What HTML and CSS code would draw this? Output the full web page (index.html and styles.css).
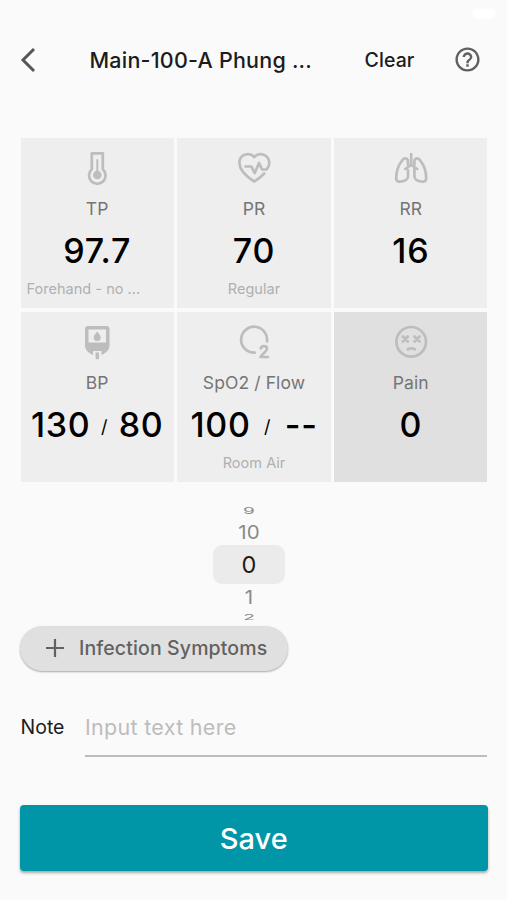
FILE: index.html
```html
<!DOCTYPE html>
<html lang="en">
<head>
<meta charset="utf-8">
<title>Vital signs</title>
<link rel="stylesheet" href="styles.css">
</head>
<body>
<div class="status"><span class="battery"></span></div>
<header class="bar">
  <svg class="back" viewBox="0 0 16 26"><path d="M14 2 3 13l11 11"/></svg>
  <h1 class="title">Main-100-A Phung ...</h1>
  <span class="clear">Clear</span>
  <svg class="help" viewBox="0 0 24 24"><path d="M11 18h2v-2h-2v2zm1-16C6.480 2 2 6.480 2 12s4.480 10 10 10 10-4.480 10-10S17.520 2 12 2zm0 18c-4.410 0-8-3.590-8-8s3.590-8 8-8 8 3.590 8 8-3.590 8-8 8zm0-14c-2.210 0-4 1.790-4 4h2c0-1.100.9-2 2-2s2 .9 2 2c0 2-3 1.750-3 5h2c0-2.250 3-2.500 3-5 0-2.210-1.790-4-4-4z"/></svg>
</header>
<main class="grid">
  <section class="card">
    <svg class="icon" viewBox="0 0 36 36"><path class="s" d="M12.800 3.300h11v16a8.300 8.300 0 1 1-11 0z"/><path class="s thin" d="M18.300 10v13"/><circle class="f" cx="18.300" cy="25" r="4.300"/></svg>
    <div class="label">TP</div><div class="value">97.7</div><div class="sub left">Forehand - no ...</div>
  </section>
  <section class="card">
    <svg class="icon" viewBox="0 0 36 36"><path class="s" d="M9.500 16.500h5.800l3.500 6.500 4.200-10 3 6.500h4.500c2.500-2.500 3.200-5.200 2.600-8.300C31.500 4 23 1.800 18.200 7 13.300 1.800 4.600 4.300 3.500 11c-1.200 8 7 15.500 14.700 20.500 4.200-2.500 7.300-5 10-8"/></svg>
    <div class="label">PR</div><div class="value">70</div><div class="sub">Regular</div>
  </section>
  <section class="card">
    <svg class="icon" viewBox="0 0 36 36"><path class="s" d="M18.200 4v11l-6 4M18.200 15l6 4M15 15v-3.500c0-3.500-3.300-4-5.500-1.500C5.500 15 3.200 21.500 3.200 28c0 3.800 3 4.200 6 3.300 4.500-.8 5.800-2 5.800-5.300v-6M21.400 15v-3.500c0-3.500 3.300-4 5.500-1.500 4 5 6.300 11.500 6.300 18 0 3.800-3 4.200-6 3.300-4.500-.8-5.800-2-5.800-5.300v-8"/></svg>
    <div class="label">RR</div><div class="value">16</div>
  </section>
  <section class="card">
    <svg class="icon" viewBox="0 0 36 36"><path class="f" fill-rule="evenodd" d="M9 2h18.500a3 3 0 0 1 3 3v16.500c0 4.500-3.500 7.500-8 9.500v-4h-8.500v4c-4.500-2-8-5-8-9.500V5a3 3 0 0 1 3-3zm.5 3.500v13h17.500v-13z"/><path class="f" d="M18.200 7.500c2 2.500 3.500 4.200 3.500 6a3.500 3.500 0 0 1-7 0c0-1.800 1.500-3.500 3.500-6zM16.600 28.500h3.400v6l-1.700 1-1.700-1z"/></svg>
    <div class="label">BP</div><div class="value">130<i class="slash">/</i>80</div>
  </section>
  <section class="card">
    <svg class="icon" viewBox="0 0 36 36"><path class="s" d="M18.800 28.700A13 13 0 1 1 31 17.500"/><path class="s" d="M24.800 24.500c.5-3.300 6.200-3.200 6.200.2 0 2.500-4 4.300-6.500 8.300h7.500"/></svg>
    <div class="label">SpO2 / Flow</div><div class="value">100<i class="slash flow">/</i>--</div><div class="sub">Room Air</div>
  </section>
  <section class="card active">
    <svg class="icon" viewBox="0 0 36 36"><circle class="s" cx="18.200" cy="17.800" r="14.800"/><path class="s" d="m9.800 12.500 5 5m0-5-5 5M21.500 12.500l5 5m0-5-5 5M14.800 25.300c2-1.100 5-1.100 7 0"/></svg>
    <div class="label">Pain</div><div class="value">0</div>
  </section>
</main>
<div class="wheel">
  <div class="tick far">9</div>
  <div class="tick near">10</div>
  <div class="tick sel">0</div>
  <div class="tick near low">1</div>
  <div class="tick far end">2</div>
</div>
<button class="chip"><svg class="plus" viewBox="0 0 18 18"><path d="M9 0v18M0 9h18"/></svg>Infection Symptoms</button>
<div class="note">
  <label class="notelabel" for="note">Note</label>
  <input class="field" id="note" placeholder="Input text here">
</div>
<button class="save">Save</button>
</body>
</html>
```
FILE: styles.css
```css
* { box-sizing: border-box; }
body { margin: 0; width: 507px; height: 900px; overflow: hidden; background: #fafafa; font-family: Inter, Roboto, sans-serif; color: #1c1c1c; display: flex; flex-direction: column; }
.status { height: 32px; flex: none; display: flex; justify-content: flex-end; padding: 9px 12px; }
.battery { width: 22px; height: 9px; border-radius: 5px; background: #fff; box-shadow: 0 0 3px #fff; }
.bar { height: 56px; flex: none; display: flex; align-items: center; padding: 0 25px 1px 20px; }
.back { width: 16px; height: 26px; flex: none; fill: none; stroke: #555; stroke-width: 3; }
.title { margin: 0 0 0 53.500px; width: 275px; font-size: 21.500px; font-weight: 500; letter-spacing: .22px; line-height: 28px; white-space: nowrap; }
.clear { font-size: 19.500px; font-weight: 500; letter-spacing: .1px; width: 88.500px; }
.help { width: 29px; height: 29px; flex: none; fill: #606060; }
.grid { margin: 50px 19.500px 0 20.500px; flex: none; display: grid; grid-template-columns: repeat(3, 1fr); grid-auto-rows: 170px; gap: 4px 3.500px; }
.card { background: #eee; padding-top: 12px; display: flex; flex-direction: column; align-items: center; min-width: 0; }
.active { background: #e0e0e0; }
.icon { width: 36px; height: 36px; flex: none; }
.s { fill: none; stroke: #bdbdbd; stroke-width: 2.700; stroke-linejoin: round; stroke-linecap: round; }
.thin { stroke-width: 2; }
.f { fill: #bdbdbd; }
.label { margin-top: 11px; font-size: 17.500px; line-height: 24px; height: 24px; color: #757575; letter-spacing: .1px; }
.value { margin-top: 10px; height: 40px; font-size: 34px; line-height: 40px; font-weight: 500; color: #000; letter-spacing: .7px; white-space: nowrap; }
.slash { display: inline-block; font-style: normal; font-size: 18px; line-height: 20px; font-weight: 400; margin: 0 10.500px; vertical-align: 4px; }
.flow { margin: 0 13.500px; }
.sub { margin-top: 8px; font-size: 14.500px; line-height: 20px; color: #b0b0b0; letter-spacing: .03px; }
.left { align-self: flex-start; margin-left: 6px; }
.wheel { margin: 20px 0 0 213px; width: 72px; height: 117px; flex: none; display: flex; flex-direction: column; text-align: center; }
.tick { flex: none; font-size: 20px; }
.far { height: 16px; line-height: 17px; color: #8a8a8a; transform: scaleY(.5); font-size: 19px; }
.near { height: 27px; line-height: 29px; color: #8a8a8a; transform: scaleY(.94); font-size: 20.500px; }
.sel { height: 39px; line-height: 40px; border-radius: 9px; background: #ebebeb; font-size: 23.500px; }
.low { height: 26px; line-height: 26px; }
.end { height: 16px; line-height: 16px; transform: scaleY(.4); }
button { border: 0; font-family: inherit; }
.chip { margin: 7px 0 0 20px; width: 268px; height: 45px; flex: none; padding: 0 0 1px 26px; border-radius: 23px; background: #e0e0e0; color: #626262; font-size: 19.500px; font-weight: 500; letter-spacing: .12px; display: flex; align-items: center; box-shadow: 0 1px 2px #0005; white-space: nowrap; }
.plus { width: 18px; height: 18px; margin-right: 15px; stroke: #626262; stroke-width: 2.200; }
.note { margin: 27px 20px 0; height: 59px; flex: none; display: flex; }
.notelabel { width: 64.500px; margin-left: .5px; font-size: 19.500px; line-height: 58px; }
.field { flex: 1; min-width: 0; border: 0; border-bottom: 2px solid #bdbdbd; background: none; padding: 0; font: 400 21.500px Inter, sans-serif; letter-spacing: .3px; outline: 0; }
.field::placeholder { color: #bdbdbd; opacity: 1; }
.save { margin: 48px 19.500px 0 20px; height: 66px; flex: none; border-radius: 4px; background: #0096a7; color: #fff; font-size: 29px; font-weight: 500; box-shadow: 0 2px 3px #0005; }
```
